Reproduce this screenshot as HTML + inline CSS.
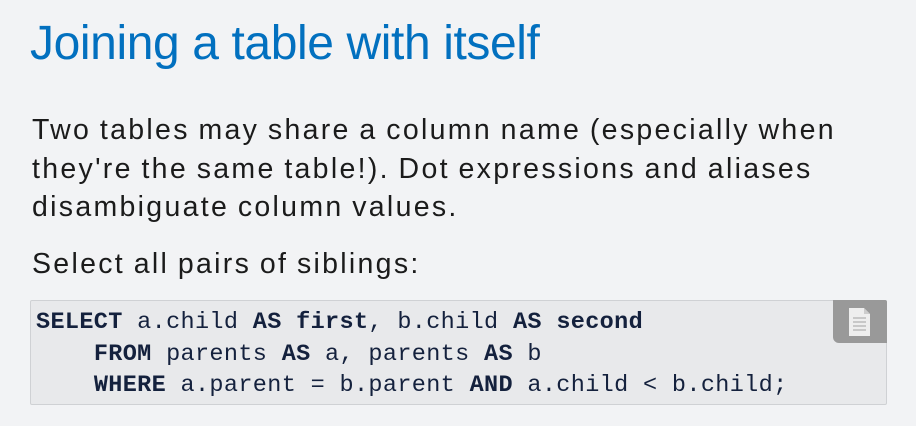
<!DOCTYPE html>
<html><head><style>
html,body{margin:0;padding:0;width:916px;height:426px;background:#f2f3f5;overflow:hidden}
h1{position:absolute;left:30px;top:14px;margin:0;font:48px/60px "Liberation Sans",sans-serif;color:#0270bf;font-weight:normal;letter-spacing:-0.4px}
.p{position:absolute;left:32px;margin:0;font:28.5px/38.5px "Liberation Sans",sans-serif;color:#1b1b1b;letter-spacing:2.3px;word-spacing:-1.5px}
.code{position:absolute;left:30px;top:300px;width:857px;height:105px;background:#e8e9eb;border:1px solid #cfd1d4;border-radius:2px;box-sizing:border-box}
pre{margin:0;position:absolute;left:5px;top:6px;font:23.5px/31.5px "Liberation Mono",monospace;color:#14213d;letter-spacing:0.35px}
pre b{font-weight:bold}
.btn{position:absolute;right:-1px;top:-1px;width:54px;height:43px;background:#999;border-radius:0 2px 0 6px}
</style></head><body>
<h1>Joining a table with itself</h1>
<p class="p" style="top:111px">Two tables may share a column name (especially when<br>they're the same table!). Dot expressions and aliases<br>disambiguate column values.</p>
<p class="p" style="top:245px">Select all pairs of siblings:</p>
<div class="code">
<pre><b>SELECT</b> a.child <b>AS</b> <b>first</b>, b.child <b>AS</b> <b>second</b>
    <b>FROM</b> parents <b>AS</b> a, parents <b>AS</b> b
    <b>WHERE</b> a.parent = b.parent <b>AND</b> a.child &lt; b.child;</pre>
<div class="btn"><svg width="54" height="43" viewBox="0 0 54 43"><path d="M16 8h15l6 6v22H16z" fill="#eee"/><path d="M31 8v6h6" fill="#ccc"/><path d="M20 18h13M20 22h13M20 26h13M20 30h13" stroke="#bbb" stroke-width="1.5"/></svg></div>
</div>
</body></html>
